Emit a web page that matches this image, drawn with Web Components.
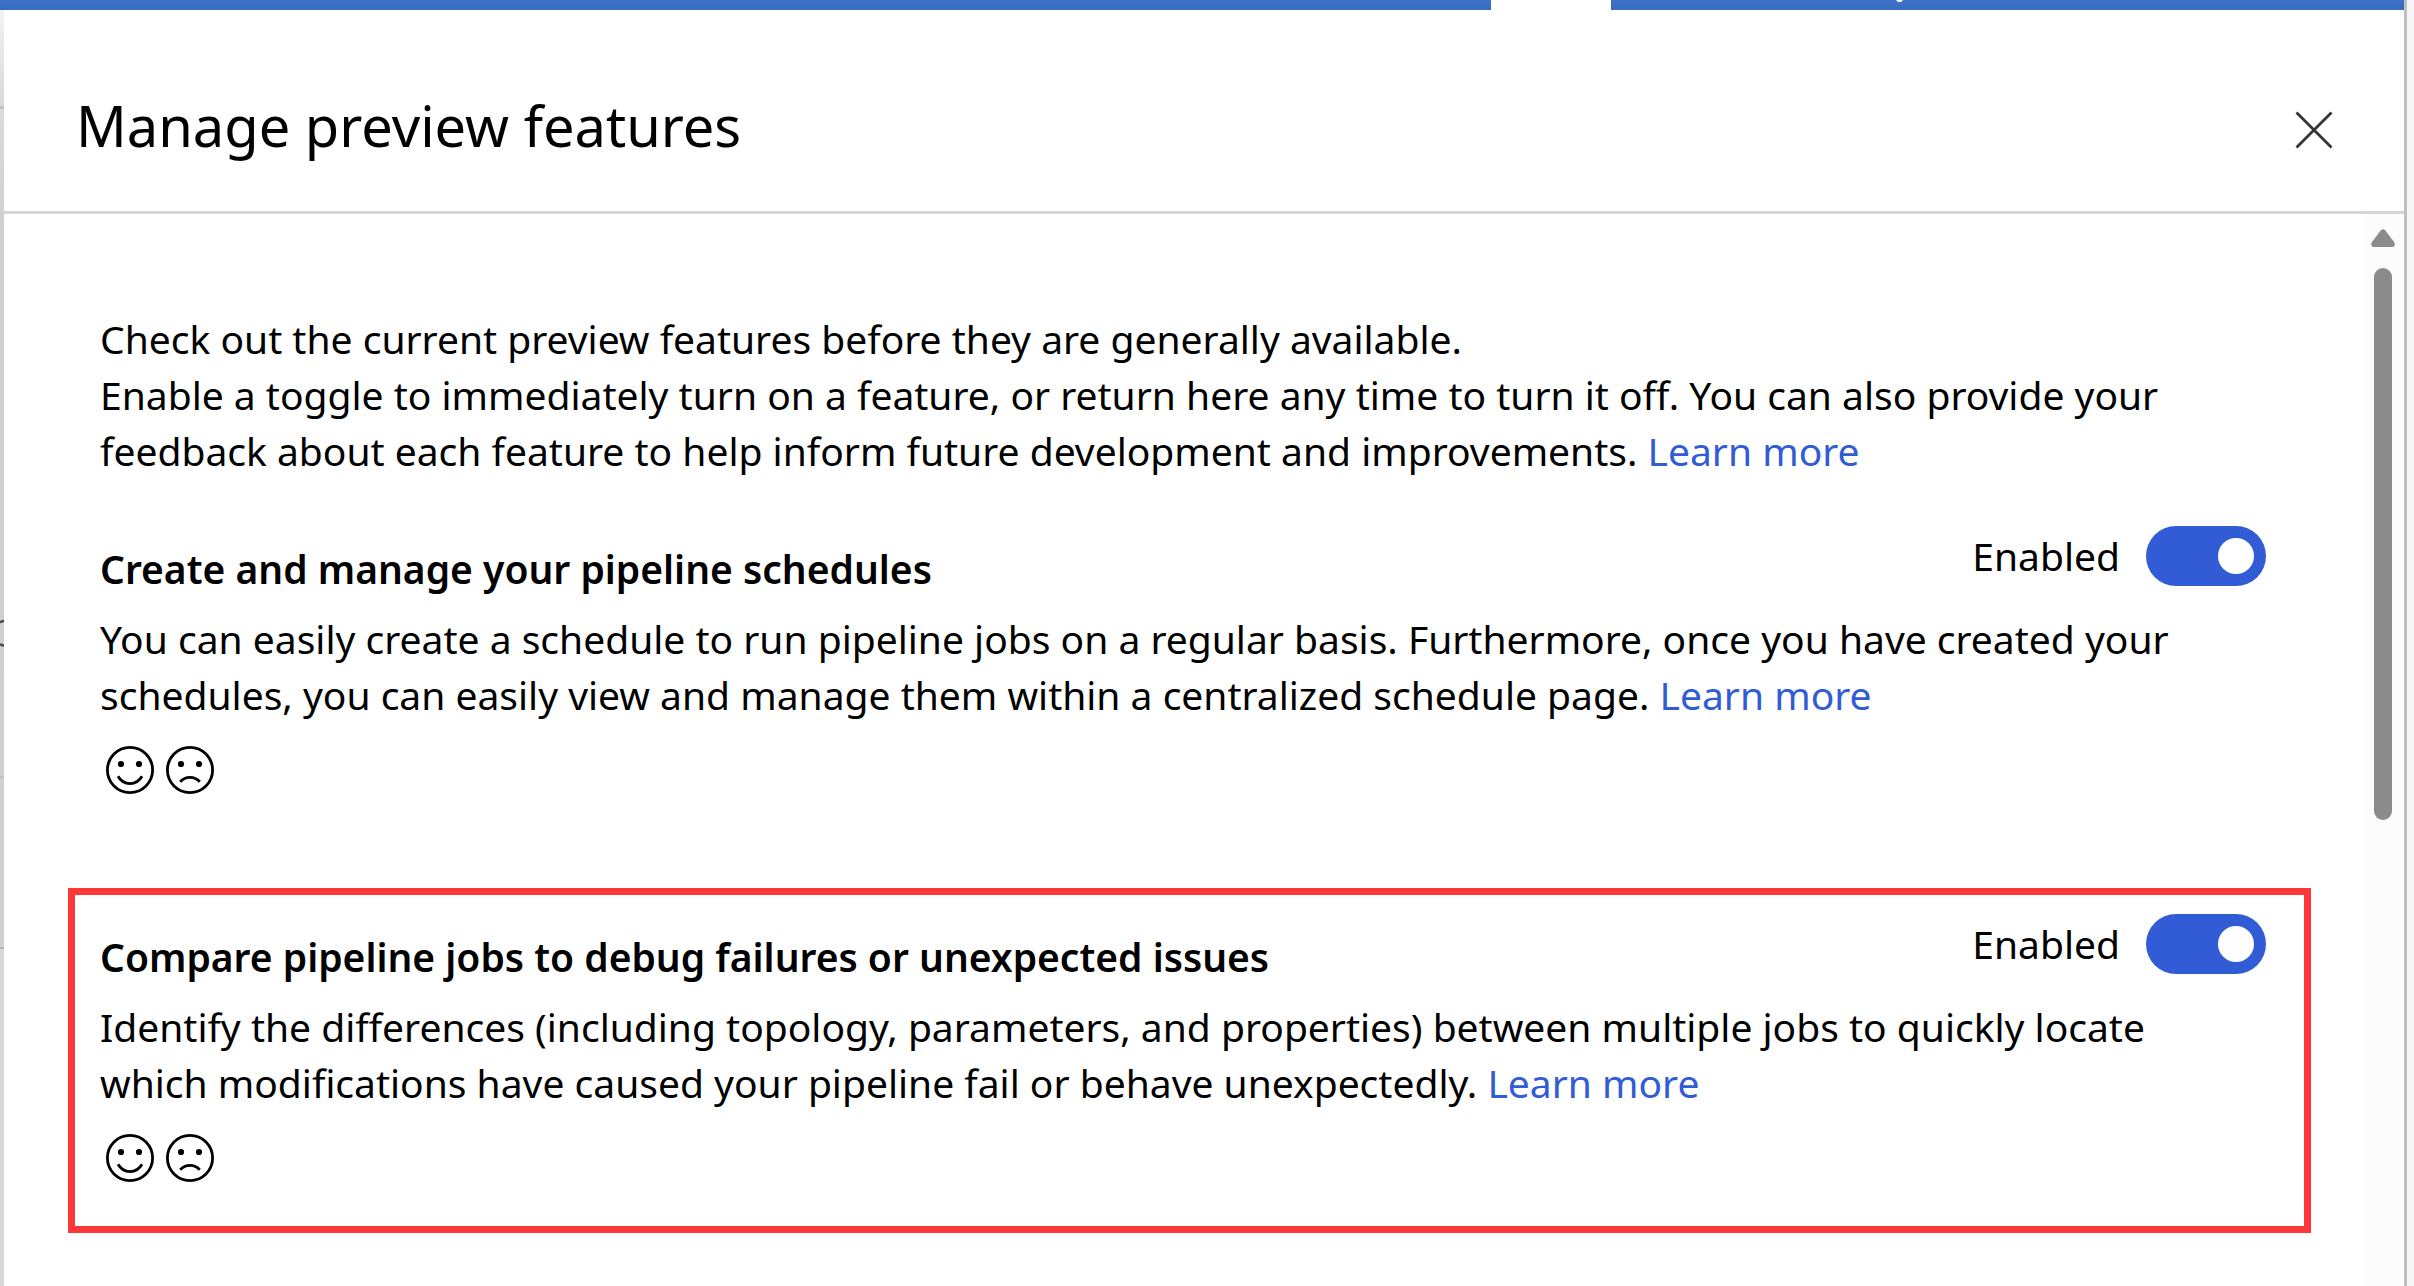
<!DOCTYPE html>
<html lang="en">
<head>
<meta charset="utf-8">
<title>Manage preview features</title>
<style>
html, body { margin: 0; height: 100%; }
body { font-family: "Noto Sans", "Open Sans", sans-serif; font-size: 39px; line-height: 56px; color: #000; background: #f7f7f7; overflow: hidden; }
a { color: #315cd5; text-decoration: none; }
p { margin: 0; }
</style>
</head>
<body>
<app-shell>
  <preview-panel heading="Manage preview features">
    <p slot="intro">Check out the current preview features before they are generally available.<br>Enable a toggle to immediately turn on a feature, or return here any time to turn it off. You can also provide your feedback about each feature to help inform future development and improvements. <a href="#learn">Learn more</a></p>
    <preview-feature heading="Create and manage your pipeline schedules">You can easily create a schedule to run pipeline jobs on a regular basis. Furthermore, once you have created your schedules, you can easily view and manage them within a centralized schedule page. <a href="#schedules">Learn more</a></preview-feature>
    <preview-feature highlighted heading="Compare pipeline jobs to debug failures or unexpected issues">Identify the differences (including topology, parameters, and properties) between multiple jobs to quickly locate which modifications have caused your pipeline fail or behave unexpectedly. <a href="#compare">Learn more</a></preview-feature>
  </preview-panel>
</app-shell>
<script>
function define(name, render) {
  customElements.define(name, class extends HTMLElement {
    constructor() {
      super();
      this.attachShadow({ mode: "open" });
    }
    connectedCallback() {
      this.shadowRoot.innerHTML = render(this);
    }
  });
}

define("app-shell", () => `
<style>
:host { display: flex; height: 100vh; }
.window { flex: 1; min-width: 0; display: flex; flex-direction: column; }
.bar { flex: none; display: flex; height: 10px; background: linear-gradient(#3c72c9, #396dbf); }
.lead { flex: 1491; }
.tab { flex: 120; background: #fff; }
.rest { flex: 793; display: flex; }
.rest svg { margin-left: 284px; width: 9px; height: 2px; }
.main { flex: 1; display: flex; min-height: 0; }
.page { flex: none; width: 4px; background: linear-gradient(#f3f3f3, #dcdcdc 80px, #d0d0d0 220px, #d2d2d2); }
.page svg { display: block; width: 4px; height: 1276px; }
.edge { flex: none; width: 7px; border-left: 3px solid #bfbfbf; background: #f7f7f7; }
slot { display: contents; }
</style>
<div class="window">
<div class="bar"><div class="lead"></div><div class="tab"></div><div class="rest"><svg viewBox="0 0 9 2"><path d="M1 0h7l-2 2H3z" fill="#fff"/></svg></div></div>
<div class="main">
  <div class="page"><svg viewBox="0 0 4 1276" aria-hidden="true">
    <path d="M0 96h4v3H0zM0 766h4v3H0z" fill="#c2c2c2"/>
    <path d="M0 612.5Q2 611 4 611M0 634Q2 635.5 4 635.5" fill="none" stroke="#4a4a4a" stroke-width="2.4"/>
    <path d="M0 937h4v2H0z" fill="#b4b4b4"/><path d="M0 939h4v337H0z" fill="#d8d8d8"/>
  </svg></div>
  <slot></slot>
</div>
</div>
<div class="edge"></div>`);

define("preview-panel", el => `
<style>
:host { flex: 1; min-width: 0; display: flex; flex-direction: column; background: #fff; }
header { flex: none; display: flex; align-items: center; justify-content: space-between; height: 201px; padding: 0 67px 0 72px; border-bottom: 3px solid #d6d6d6; }
h1 { margin: 0; padding-top: 28px; font-size: 56px; line-height: 76px; font-weight: 400; }
button { display: flex; margin: 38px 0 0; padding: 4px; border: 0; background: none; }
button svg { width: 38px; height: 38px; }
.body { flex: 1; min-height: 0; display: flex; }
.content { flex: 1; min-width: 0; display: flex; flex-direction: column; gap: 43px; padding: 97px 51px 0 64px; overflow: hidden; }
.intro { padding: 0 45px 0 32px; margin-bottom: -22px; }
</style>
<header>
  <h1>${el.getAttribute("heading")}</h1>
  <button type="button" aria-label="Close"><svg viewBox="0 0 38 38"><path d="M1.5 1.5l35 35M36.5 1.5l-35 35" fill="none" stroke="#333" stroke-width="2.8"/></svg></button>
</header>
<div class="body">
  <div class="content">
    <div class="intro"><slot name="intro"></slot></div>
    <slot></slot>
  </div>
  <scroll-rail></scroll-rail>
</div>`);

define("scroll-rail", () => `
<style>
:host { flex: none; display: flex; flex-direction: column; align-items: center; gap: 21px; width: 42px; padding-top: 15px; box-sizing: border-box; background: #fcfcfc; }
svg { width: 24px; height: 18px; }
.thumb { width: 18px; height: 552px; border-radius: 9px; background: #8b8b8b; }
</style>
<svg viewBox="0 0 24 18" aria-hidden="true"><path d="M9.6 1.6Q12 -1.2 14.4 1.6L23.2 13.2Q25 17.4 21.5 18H2.5Q-1 17.4 .8 13.2z" fill="#8b8b8b"/></svg>
<div class="thumb"></div>`);

define("preview-feature", el => `
<style>
:host { display: block; padding: 19px 38px 44px 25px; border: 7px solid transparent; }
:host([highlighted]) { border-color: #fc3838; }
.top { display: flex; justify-content: space-between; height: 71px; margin-bottom: 14px; }
h2 { align-self: flex-end; margin: 0; font-size: 39px; line-height: 56px; font-weight: 600; }
p { margin: 0; padding-right: 40px; }
</style>
<div class="top"><h2>${el.getAttribute("heading")}</h2><toggle-switch></toggle-switch></div>
<p><slot></slot></p>
<feedback-faces></feedback-faces>`);

define("toggle-switch", () => `
<style>
:host { display: block; }
label { display: flex; align-items: center; gap: 26px; height: 60px; }
input { appearance: none; display: flex; align-items: center; justify-content: flex-end; box-sizing: border-box; width: 120px; height: 60px; margin: 0; padding: 12px; border-radius: 30px; background: #315cd5; }
input::before { content: ""; width: 36px; height: 36px; border-radius: 50%; background: #fff; }
input:not(:checked) { justify-content: flex-start; background: #8a8a8a; }
</style>
<label><span>Enabled</span><input type="checkbox" role="switch" checked></label>`);

define("feedback-faces", () => `
<style>
:host { display: flex; gap: 12px; padding: 23px 0 0 6px; }
button { display: block; width: 48px; height: 48px; padding: 0; border: 0; background: none; }
svg { display: block; width: 48px; height: 48px; fill: none; stroke: #000; stroke-width: 2.8; }
.eye { fill: #000; stroke: none; }
</style>
<button type="button" aria-label="Smile"><svg viewBox="0 0 48 48"><circle cx="24" cy="24" r="22.6"/><circle class="eye" cx="15" cy="18" r="3.1"/><circle class="eye" cx="33" cy="18" r="3.1"/><path d="M12 30.3C17.5 40 30.5 40 36 30.3"/></svg></button>
<button type="button" aria-label="Frown"><svg viewBox="0 0 48 48"><circle cx="24" cy="24" r="22.6"/><circle class="eye" cx="15" cy="18" r="3.1"/><circle class="eye" cx="33" cy="18" r="3.1"/><path d="M14.2 35.7C19.5 29.9 28.5 29.9 33.8 35.7"/></svg></button>`);
</script>
</body>
</html>
